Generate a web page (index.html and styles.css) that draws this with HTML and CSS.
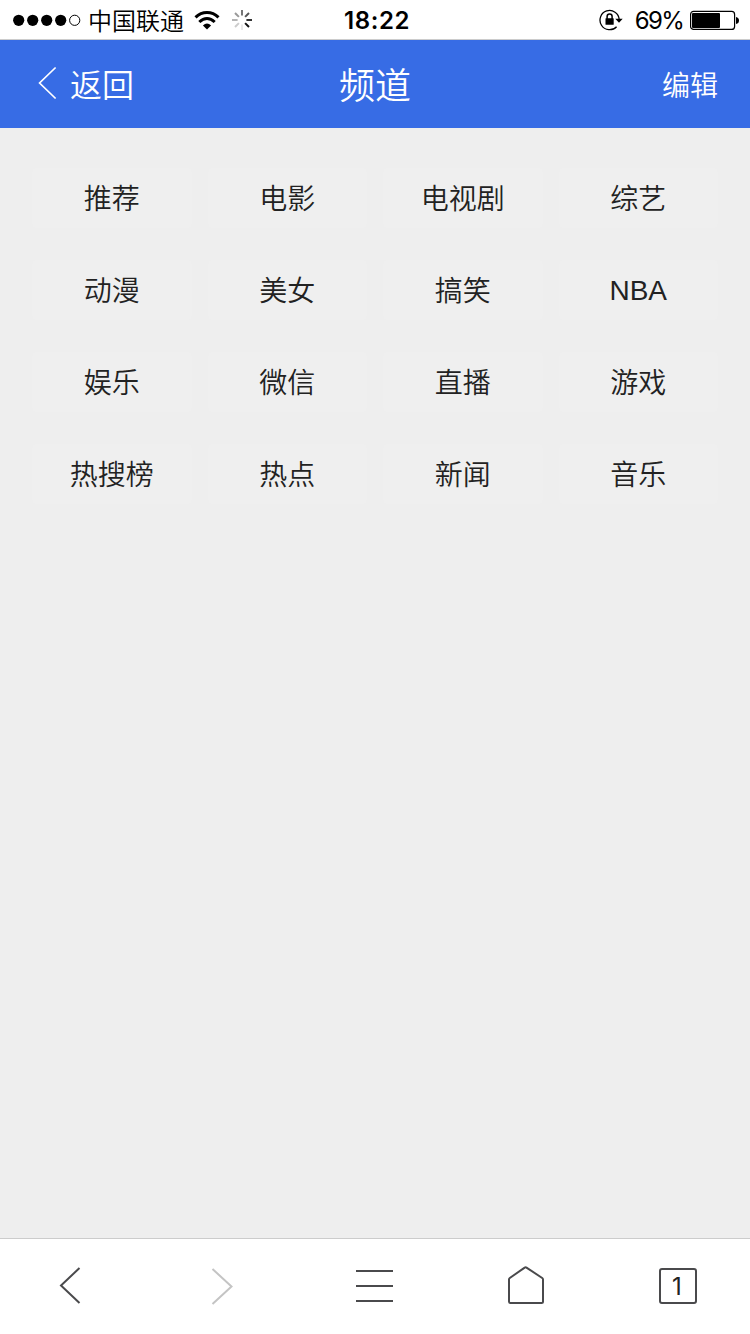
FILE: index.html
```html
<!DOCTYPE html>
<html lang="zh-CN">
<head>
<meta charset="utf-8">
<title>频道</title>
<link rel="stylesheet" href="styles.css">
</head>
<body>
<div class="screen">
  <div class="status">
    <div class="status-left">
      <svg class="signal" width="68" height="12" viewBox="0 0 68 12">
        <circle cx="5.7" cy="6.3" r="5.6"/><circle cx="19.7" cy="6.3" r="5.6"/><circle cx="33.7" cy="6.3" r="5.6"/><circle cx="47.7" cy="6.3" r="5.6"/>
        <circle cx="61.7" cy="6.3" r="5.1" fill="none" stroke="#000"/>
      </svg>
      <span class="carrier">中国联通</span>
      <svg class="wifi" width="26" height="20" viewBox="0 0 26 20">
        <g fill="none" stroke="#000" stroke-width="3">
          <path d="M1.5 7.4Q6.5 2.5 13 2.5T24.5 7.4"/>
          <path d="M5.3 12Q9 8.5 13 8.5T20.7 12"/>
        </g>
        <path d="M8.9 15.6Q13 11.4 17.1 15.6L13 19.5Z"/>
      </svg>
      <svg class="spinner" width="22" height="22" viewBox="-11 -11 22 22" stroke-width="2">
        <path d="M0-4.4V-10" stroke="#777"/>
        <path d="M3.1-3.1L7-7" stroke="#555"/>
        <path d="M4.4 0H10" stroke="#333"/>
        <path d="M3.1 3.1L7 7" stroke="#111"/>
        <path d="M0 4.4V10" stroke="#e8e8e8"/>
        <path d="M-3.1 3.1L-7 7" stroke="#ccc"/>
        <path d="M-4.4 0H-10" stroke="#b5b5b5"/>
        <path d="M-3.1-3.1L-7-7" stroke="#999"/>
      </svg>
    </div>
    <span class="clock">18:22</span>
    <div class="status-right">
      <svg class="lock" width="26" height="22" viewBox="0 0 26 22">
        <path d="M17.6 17.7A9.6 9.6 0 1 1 20.2 10.5" fill="none" stroke="#000" stroke-width="1.3"/>
        <path d="M16.3 9.8H23.7L20 13.8Z"/>
        <rect x="6.5" y="9.2" width="8.2" height="6.6" rx=".6"/>
        <path d="M8.1 10V7.4a2.5 2.5 0 0 1 5 0V10" fill="none" stroke="#000" stroke-width="1.5"/>
      </svg>
      <span class="percent">69%</span>
      <svg class="battery" width="50" height="20" viewBox="0 0 50 20">
        <rect x=".6" y="1.4" width="44" height="18" rx="3" fill="none" stroke="#000" stroke-width="1.2"/>
        <rect x="2" y="3" width="28" height="15" rx="1"/>
        <path d="M46 7Q49 7.5 49 10.5T46 14Z"/>
      </svg>
    </div>
  </div>

  <header class="header">
    <div class="back">
      <svg width="20" height="34" viewBox="0 0 20 34"><path d="M18.6 1.5L2.6 17L18.6 32.5" fill="none" stroke="#fff" stroke-width="1.7"/></svg>
      <span>返回</span>
    </div>
    <h1 class="title">频道</h1>
    <span class="edit">编辑</span>
  </header>

  <main class="channels">
    <div class="channel">推荐</div><div class="channel">电影</div><div class="channel">电视剧</div><div class="channel">综艺</div>
    <div class="channel">动漫</div><div class="channel">美女</div><div class="channel">搞笑</div><div class="channel latin">NBA</div>
    <div class="channel">娱乐</div><div class="channel">微信</div><div class="channel">直播</div><div class="channel">游戏</div>
    <div class="channel">热搜榜</div><div class="channel">热点</div><div class="channel">新闻</div><div class="channel">音乐</div>
  </main>

  <nav class="toolbar">
    <svg width="40" height="40" viewBox="0 0 40 40"><path d="M29.5 2L11 19.5L29.5 37"/></svg>
    <svg class="disabled" width="40" height="40" viewBox="0 0 40 40"><path d="M10.5 3L29.5 20.5L10.5 38"/></svg>
    <svg width="40" height="40" viewBox="0 0 40 40"><path d="M2 5H39M2 20H39M2 35H39"/></svg>
    <svg width="40" height="40" viewBox="0 0 40 40"><path d="M3 13.5Q3 12.6 3.8 12L18.7 1.6Q19.6 1 20.5 1.6L36.2 12Q37 12.6 37 13.5V35.5Q37 37 35.5 37H4.5Q3 37 3 35.5Z"/></svg>
    <div class="tabs">1</div>
  </nav>
</div>
</body>
</html>
```
FILE: styles.css
```css
* { box-sizing: border-box; }

body {
  margin: 0;
  font-family: "Liberation Sans", "Noto Sans CJK SC", sans-serif;
  color: #222;
}

svg { display: block; flex: none; }

.screen {
  display: flex;
  flex-direction: column;
  width: 750px;
  height: 1334px;
  background: #eee;
}

.status {
  display: grid;
  grid-template-columns: 1fr auto 1fr;
  grid-template-rows: 38px;
  align-items: center;
  height: 40px;
  padding: 1px 10px 0 13px;
  background: #fff;
  border-bottom: 1px solid #ccc;
  color: #000;
}

.status-left, .status-right {
  display: flex;
  align-items: center;
  height: 38px;
}

.status-right { justify-content: flex-end; }

.carrier {
  margin-left: 7px;
  font: 350 24px/36px "Noto Sans CJK SC DemiLight", "Noto Sans CJK SC", sans-serif;
}

.wifi { margin-left: 10px; }
.spinner { margin-left: 11px; }

.clock {
  padding: 2px 0 0 1px;
  font: 600 24px/36px Inter, sans-serif;
  letter-spacing: .6px;
}

.percent {
  margin: 0 7px 0 10px;
  padding-top: 2px;
  font: 400 24px/36px Inter, sans-serif;
  letter-spacing: -1.7px;
}

.header {
  display: grid;
  grid-template-columns: 1fr auto 1fr;
  align-items: center;
  height: 88px;
  padding: 0 32px 0 37px;
  background: #376ce5;
  color: #fff;
  font-family: "Noto Sans CJK SC DemiLight", "Noto Sans CJK SC", sans-serif;
  font-weight: 350;
}

.back {
  display: flex;
  align-items: center;
  gap: 13px;
  font-size: 32px;
}

.back svg { margin-bottom: 2px; }

.back span {
  padding-bottom: 2px;
  line-height: 84px;
}

.title {
  margin: 0 5px 0 0;
  padding-bottom: 2px;
  font-size: 36px;
  font-weight: 350;
  line-height: 86px;
}

.edit {
  justify-self: end;
  font-size: 28px;
  line-height: 88px;
}

.channels {
  flex: 1;
  display: grid;
  grid-template-columns: repeat(4, 1fr);
  grid-auto-rows: 60px;
  gap: 32px 16px;
  padding: 40px 32px 0;
}

.channel {
  background: #efefef;
  border-radius: 4px;
  font: 350 28px/59px "Noto Sans CJK SC DemiLight", "Noto Sans CJK SC", sans-serif;
  text-align: center;
}

.latin {
  font-family: "Liberation Sans", sans-serif;
  line-height: 61px;
}

.toolbar {
  display: flex;
  justify-content: space-between;
  height: 96px;
  padding: 27px 52px 0 50px;
  background: #fff;
  border-top: 1px solid #ccc;
}

.toolbar svg {
  fill: none;
  stroke: #4a4a4c;
  stroke-width: 2;
}

.toolbar .disabled { stroke: #c4c4c4; }

.tabs {
  width: 38px;
  height: 36px;
  margin: 2px 1px 0;
  padding-right: 2px;
  border: 2px solid #4a4a4c;
  border-radius: 3px;
  font: 400 24px/34px Inter, sans-serif;
  text-align: center;
}
```
